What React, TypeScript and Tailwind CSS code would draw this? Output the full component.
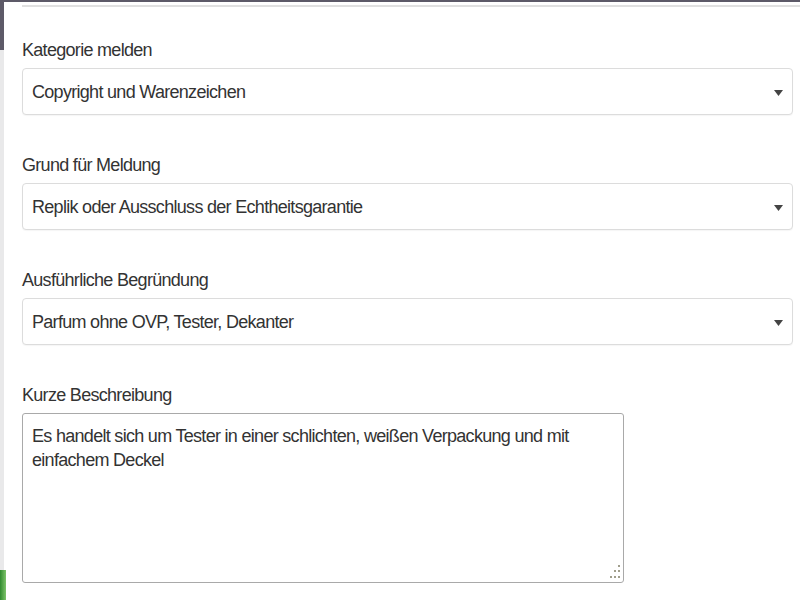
import React from "react";

const font = { fontFamily: '"Liberation Sans", Arial, sans-serif' };

function Arrow() {
  return (
    <svg className="pointer-events-none absolute right-[10px] top-[22px]" width="9" height="6" viewBox="0 0 9 6">
      <path d="M0 0 H9 L4.5 6 Z" fill="#444" />
    </svg>
  );
}

function SelectField({ label, value }: { label: string; value: string }) {
  return (
    <div className="flex flex-col">
      <label className="mb-[6px] h-[24px] text-[18px] leading-[24px] tracking-[-0.7px] text-[#333]">{label}</label>
      <div className="relative">
        <select
          defaultValue={value}
          style={font}
          className="h-[47px] w-full appearance-none rounded-[4px] border border-[#dcdcdc] bg-white px-[9px] text-[18px] leading-[24px] tracking-[-0.7px] text-[#333] shadow-[0_1px_1px_rgba(0,0,0,0.04)] outline-none"
        >
          <option>{value}</option>
        </select>
        <Arrow />
      </div>
    </div>
  );
}

export default function App() {
  return (
    <div className="flex h-[600px] w-[800px] overflow-hidden bg-white" style={font}>
      <div className="flex w-[4px] flex-col">
        <div className="h-[50px] bg-[#5d5a68]" />
        <div className="flex-1 bg-[#e9e9ea]" />
        <div className="h-[30px] w-[6px] bg-gradient-to-r from-[#2f8a2f] to-[#7cc46a]" />
      </div>
      <div className="flex flex-1 flex-col">
        <div className="h-[2px] bg-[#5d5a68]" />
        <div className="h-[3px]" />
        <div className="ml-[18px] h-[2px] bg-[#e0e0e0]" />
        <div className="flex flex-col gap-[38px] pl-[18px] pr-[7px] pt-[31px]">
          <SelectField label="Kategorie melden" value="Copyright und Warenzeichen" />
          <SelectField label="Grund für Meldung" value="Replik oder Ausschluss der Echtheitsgarantie" />
          <SelectField label="Ausführliche Begründung" value="Parfum ohne OVP, Tester, Dekanter" />
          <div className="flex flex-col">
            <label className="mb-[6px] h-[24px] text-[18px] leading-[24px] tracking-[-0.7px] text-[#333]">Kurze Beschreibung</label>
            <div className="relative w-[602px]">
              <textarea
                style={font}
                defaultValue={"Es handelt sich um Tester in einer schlichten, weißen Verpackung und mit einfachem Deckel"}
                className="block h-[170px] w-[602px] resize-none rounded-[3px] border border-[#a9a9a9] bg-white px-[9px] pt-[10px] text-[18px] leading-[24px] tracking-[-0.7px] text-[#333] outline-none"
              />
              <svg className="pointer-events-none absolute bottom-[4px] right-[3px]" width="11" height="15" viewBox="0 0 11 15">
                <rect x="8" y="1" width="2" height="2" fill="#a09e8c" />
                <rect x="4" y="6" width="2" height="2" fill="#a09e8c" />
                <rect x="8" y="6" width="2" height="2" fill="#a09e8c" />
                <rect x="0" y="12" width="2" height="2" fill="#a09e8c" />
                <rect x="4" y="12" width="2" height="2" fill="#a09e8c" />
                <rect x="8" y="12" width="2" height="2" fill="#a09e8c" />
              </svg>
            </div>
          </div>
        </div>
      </div>
    </div>
  );
}
